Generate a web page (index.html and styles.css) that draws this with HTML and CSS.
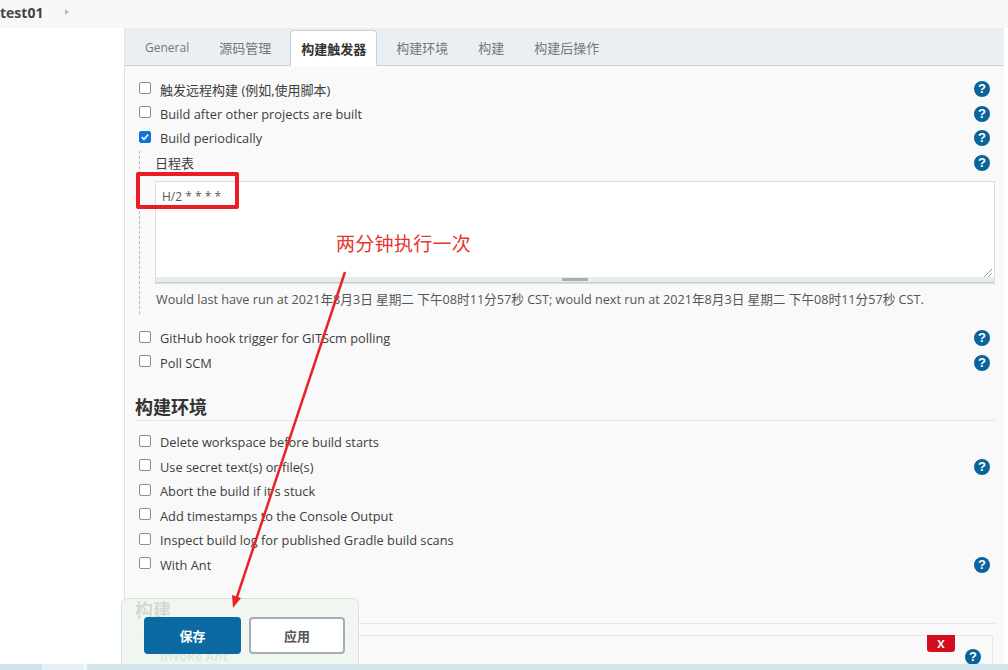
FILE: index.html
```html
<!DOCTYPE html>
<html lang="zh">
<head>
  <meta charset="UTF-8" />
  <title>test01 Config</title>
  <link rel="stylesheet" href="styles.css">
</head>
<body>

  <div class="topbar">
    <span class="crumb">test01</span>
    <span class="crumb-arrow"></span>
  </div>

  <div class="layout">
    <div class="sidebar"></div>

    <div class="main">
      <div class="tabs">
        <span class="tab tab-latin">General</span>
        <span class="tab">源码管理</span>
        <span class="tab active">构建触发器</span>
        <span class="tab">构建环境</span>
        <span class="tab">构建</span>
        <span class="tab">构建后操作</span>
      </div>

      <div class="form">
        <div class="row"><span class="check"></span><span class="label label-cjk">触发远程构建 (例如,使用脚本)</span><span class="help">?</span></div>
        <div class="row"><span class="check"></span><span class="label">Build after other projects are built</span><span class="help">?</span></div>
        <div class="row"><span class="check checked"><svg viewBox="0 0 12 12" width="10" height="10"><path d="M2.2 6.2l2.6 2.6 5-5.6" fill="none" stroke="#fff" stroke-width="2"/></svg></span><span class="label">Build periodically</span><span class="help">?</span></div>

        <div class="nested">
          <div class="row"><span class="label label-cjk">日程表</span><span class="help">?</span></div>
          <div class="schedule">
            <div class="schedule-text">H/2 * * * *</div>
            <svg class="resize-corner" viewBox="0 0 10 10" width="10" height="10"><path d="M1 9l8-8M5 9l4-4" stroke="#999" stroke-width="1"/></svg>
            <div class="grip"><span class="grip-handle"></span></div>
          </div>
          <p class="note">Would last have run at 2021年8月3日 星期二 下午08时11分57秒 CST; would next run at 2021年8月3日 星期二 下午08时11分57秒 CST.</p>
        </div>

        <div class="row"><span class="check"></span><span class="label">GitHub hook trigger for GITScm polling</span><span class="help">?</span></div>
        <div class="row"><span class="check"></span><span class="label">Poll SCM</span><span class="help">?</span></div>

        <h2 class="section">构建环境</h2>
        <div class="row"><span class="check"></span><span class="label">Delete workspace before build starts</span></div>
        <div class="row"><span class="check"></span><span class="label">Use secret text(s) or file(s)</span><span class="help">?</span></div>
        <div class="row"><span class="check"></span><span class="label">Abort the build if it's stuck</span></div>
        <div class="row"><span class="check"></span><span class="label">Add timestamps to the Console Output</span></div>
        <div class="row"><span class="check"></span><span class="label">Inspect build log for published Gradle build scans</span></div>
        <div class="row"><span class="check"></span><span class="label">With Ant</span><span class="help">?</span></div>

        <h2 class="section section-build">构建</h2>
        <div class="step">
          <span class="step-close">X</span>
          <span class="step-name">Invoke Ant</span>
          <span class="help">?</span>
        </div>
      </div>
    </div>
  </div>

  <div class="save-bar">
    <button class="btn-save">保存</button>
    <button class="btn-apply">应用</button>
  </div>

  <div class="bottom-strip">
    <span class="strip-a"></span>
    <span class="strip-b"></span>
    <span class="strip-c"></span>
  </div>

  <!-- anotaciones encima de la captura -->
  <div class="mark-box"></div>
  <div class="mark-text">两分钟执行一次</div>
  <svg class="mark-arrow" width="1008" height="670" viewBox="0 0 1008 670">
    <path d="M345 272L236 600" stroke="#e8232b" stroke-width="2.5" fill="none"/>
    <path d="M233 608L232 595L241 598Z" fill="#e8232b"/>
  </svg>

</body>
</html>
```

FILE: styles.css
```css
html, body {
  margin: 0;
  height: 670px;
  overflow: hidden;
  background: #fff;
}
body {
  position: relative;
  font-family: "Open Sans", "Noto Sans CJK SC", sans-serif;
  font-size: 13px;
  color: #333;
}
.topbar {
  display: flex;
  align-items: center;
  height: 28px;
  background: #f8f8f8;
  padding-bottom: 4px;
  box-sizing: border-box;
}
.crumb {
  font-weight: 700;
  font-size: 14px;
  color: #444;
  width: 65px;
}
.crumb-arrow {
  border-left: 4px solid #bbb;
  border-top: 3px solid transparent;
  border-bottom: 3px solid transparent;
}
.layout {
  display: flex;
}
.sidebar {
  width: 124px;
  flex: none;
}
.main {
  width: 880px;
  flex: none;
  border-left: 1px solid #dfe3e6;
  box-sizing: border-box;
  height: 642px;
  background: #f9f9f9;
}
.tabs {
  display: flex;
  align-items: flex-end;
  gap: 6px;
  height: 38px;
  padding-left: 8px;
  box-sizing: border-box;
  background: #e9eff2;
  border-bottom: 1px solid #c9d2d8;
}
.tab {
  display: flex;
  align-items: center;
  height: 34px;
  padding: 0 11px 2px;
  color: #777;
  border: 1px solid transparent;
  border-bottom: 0;
  box-sizing: border-box;
}
.tab-latin {
  font-size: 12px;
}
.tab.active {
  height: 36px;
  margin: 0 1px -1px;
  padding: 0 10px;
  background: #fff;
  color: #333;
  font-weight: 700;
  border-color: #c9d2d8;
  border-radius: 4px 4px 0 0;
}
.form {
  padding: 11px 9px 0 10px;
}
.row {
  display: flex;
  align-items: center;
  height: 24.5px;
  font-size: 12.8px;
}
.check {
  display: flex;
  box-sizing: border-box;
  width: 12px;
  height: 12px;
  margin: -3px 9px 0 4px;
  flex: none;
  background: #fff;
  border: 1px solid #8f8f8f;
  border-radius: 2px;
  overflow: hidden;
}
.check.checked {
  background: #0d74d8;
  border-color: #0d74d8;
}
.label {
  flex: 1;
  font-weight: 500;
  color: #3d3d3d;
}
.label-cjk {
  font-size: 13px;
  font-weight: 400;
}
.help {
  width: 16px;
  height: 16px;
  flex: none;
  border-radius: 50%;
  background: #0b639c;
  color: #fff;
  font-family: "Liberation Sans", sans-serif;
  font-size: 13px;
  font-weight: 700;
  line-height: 16px;
  text-align: center;
  margin-right: 5px;
}
.nested {
  margin-left: 4px;
  padding-left: 15px;
  border-left: 1px dashed #bbb;
  margin-bottom: 12px;
}
.schedule {
  position: relative;
  width: 840px;
  height: 103px;
  margin-top: 6px;
  box-sizing: border-box;
  background: #fff;
  border: 1px solid #d9dde0;
}
.schedule-text {
  padding: 6px 6px;
  font-size: 12px;
  line-height: 18px;
  color: #555;
}
.resize-corner {
  position: absolute;
  right: 1px;
  bottom: 5px;
}
.grip {
  position: absolute;
  left: 0;
  right: 0;
  bottom: 0;
  height: 5px;
  display: flex;
  justify-content: center;
  background: #e7ecee;
  border-bottom: 1px solid #c5cfd5;
}
.grip-handle {
  width: 26px;
  height: 3px;
  background: #a9aeb1;
  margin-top: 1px;
}
.note {
  margin: 5px 0 0 1px;
  height: 25px;
  font-size: 12.65px;
  color: #555;
}
.section {
  margin: 20px 0 9px 0;
  padding-bottom: 1px;
  font-size: 18px;
  line-height: 24px;
  font-weight: 700;
  color: #333;
  border-bottom: 1px solid #e6e6e6;
}
.section-build {
  margin-top: 21px;
}
.step {
  position: relative;
  display: flex;
  justify-content: flex-end;
  align-items: flex-start;
  height: 40px;
  margin: 11px 2px 0 1px;
  border: 1px solid #e6e6e6;
}
.step .help {
  margin: 13px 11px 0 0;
}
.step-close {
  position: absolute;
  right: 37px;
  top: -1px;
  width: 28px;
  height: 17px;
  background: #d10f1e;
  color: #fff;
  font-size: 11px;
  font-weight: 700;
  line-height: 17px;
  text-align: center;
  border-radius: 0 0 3px 3px;
}
.step-name {
  position: absolute;
  left: 23px;
  top: 12px;
  font-size: 12.5px;
  font-weight: 700;
  color: #888;
}
.save-bar {
  position: absolute;
  left: 121px;
  top: 598px;
  width: 238px;
  height: 72px;
  box-sizing: border-box;
  display: flex;
  gap: 8px;
  padding: 18px 0 0 22px;
  background: rgba(240, 247, 238, 0.85);
  border: 1px solid #d6e6d6;
  border-radius: 6px 6px 0 0;
}
.btn-save, .btn-apply {
  width: 97px;
  height: 37px;
  padding: 0;
  font-family: inherit;
  font-size: 13px;
  font-weight: 700;
  cursor: pointer;
  border-radius: 4px;
}
.btn-save {
  background: #0b6aa2;
  color: #fff;
  border: none;
}
.btn-apply {
  width: 96px;
  background: #fff;
  color: #555;
  border: 2px solid #a3adb5;
}
.bottom-strip {
  position: absolute;
  left: 0;
  right: 0;
  bottom: 0;
  height: 6px;
  display: flex;
  background: #d3e6ee;
}
.strip-a {
  width: 42px;
  background: #cfe3ed;
}
.strip-b {
  width: 41px;
  background: #e4f1f8;
}
.strip-c {
  width: 4px;
  background: #f2f7fa;
}
.mark-box {
  position: absolute;
  left: 136px;
  top: 172px;
  width: 103px;
  height: 37px;
  box-sizing: border-box;
  border: 4px solid #ea1c24;
  border-radius: 2px;
}
.mark-text {
  position: absolute;
  left: 336px;
  top: 230px;
  font-size: 19px;
  letter-spacing: 0.3px;
  line-height: 28px;
  color: #e8342c;
}
.mark-arrow {
  position: absolute;
  left: 0;
  top: 0;
  pointer-events: none;
}
```
